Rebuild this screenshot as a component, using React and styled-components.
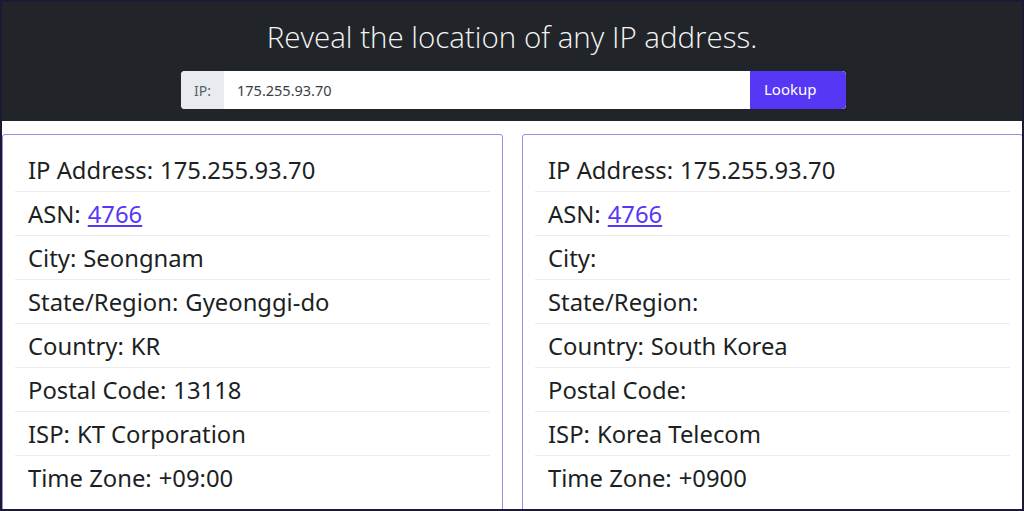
import React from "react";
import styled, { createGlobalStyle } from "styled-components";

const GlobalStyle = createGlobalStyle`
  html, body {
    margin: 0;
    padding: 0;
    background: #ffffff;
  }
  body {
    font-family: "Noto Sans", "Open Sans", sans-serif;
    color: #212529;
  }
`;

const Frame = styled.div`
  box-sizing: border-box;
  width: 1024px;
  height: 511px;
  border: 2px solid #1b1a33;
  overflow: hidden;
  background: #ffffff;
`;

const Header = styled.header`
  background: #212529;
  padding: 17px 0 12px;
  display: flex;
  flex-direction: column;
  align-items: center;
  gap: 16px;
`;

const Title = styled.h1`
  margin: 0;
  font-family: "Open Sans", "Noto Sans", sans-serif;
  font-weight: 300;
  font-size: 29.5px;
  line-height: 36px;
  color: #f4f4f4;
`;

const InputGroup = styled.div`
  display: flex;
  width: 665px;
  height: 38px;
  margin-left: 3px;
  border-radius: 4px;
  overflow: hidden;
  background: #ffffff;
`;

const Addon = styled.span`
  display: flex;
  align-items: center;
  justify-content: center;
  width: 43px;
  background: #e9ecef;
  font-size: 14px;
  color: #5a5f66;
`;

const Field = styled.div`
  flex: 1;
  display: flex;
  align-items: center;
  padding-left: 13px;
  font-size: 14.5px;
  color: #3a3f45;
`;

const Button = styled.button`
  width: 96px;
  border: none;
  background: #5637f5;
  color: #ffffff;
  font-family: "Noto Sans", sans-serif;
  font-size: 15px;
  text-align: left;
  padding: 0 0 2px 14px;
  border-radius: 0 4px 4px 0;
`;

const Cards = styled.main`
  display: grid;
  grid-template-columns: 501px 501px;
  gap: 19px;
  padding-top: 13px;
`;

const Card = styled.section`
  box-sizing: border-box;
  border: 1px solid #968de6;
  border-radius: 3px;
  padding: 13px 12px 0;
  height: 400px;
`;

const Row = styled.div`
  height: 44px;
  display: flex;
  align-items: center;
  padding: 0 13px;
  font-size: 23.8px;
  color: #1c1f23;
  border-bottom: ${(p) => (p.$last ? "none" : "1px solid #ececee")};
  box-sizing: border-box;
`;

const Link = styled.a`
  color: #5637f5;
  text-decoration: underline;
  margin-left: 7px;
`;

const Value = styled.span`
  margin-left: 7px;
`;

const left = [
  ["IP Address:", "175.255.93.70"],
  ["ASN:", "4766", true],
  ["City:", "Seongnam"],
  ["State/Region:", "Gyeonggi-do"],
  ["Country:", "KR"],
  ["Postal Code:", "13118"],
  ["ISP:", "KT Corporation"],
  ["Time Zone:", "+09:00"],
];

const right = [
  ["IP Address:", "175.255.93.70"],
  ["ASN:", "4766", true],
  ["City:", ""],
  ["State/Region:", ""],
  ["Country:", "South Korea"],
  ["Postal Code:", ""],
  ["ISP:", "Korea Telecom"],
  ["Time Zone:", "+0900"],
];

const InfoCard = ({ rows }) => (
  <Card>
    {rows.map(([label, value, isLink], i) => (
      <Row key={label} $last={i === rows.length - 1}>
        {label}
        {isLink ? <Link href="#">{value}</Link> : value && <Value>{value}</Value>}
      </Row>
    ))}
  </Card>
);

export default function App() {
  return (
    <Frame>
      <GlobalStyle />
      <Header>
        <Title>Reveal the location of any IP address.</Title>
        <InputGroup>
          <Addon>IP:</Addon>
          <Field>175.255.93.70</Field>
          <Button>Lookup</Button>
        </InputGroup>
      </Header>
      <Cards>
        <InfoCard rows={left} />
        <InfoCard rows={right} />
      </Cards>
    </Frame>
  );
}
